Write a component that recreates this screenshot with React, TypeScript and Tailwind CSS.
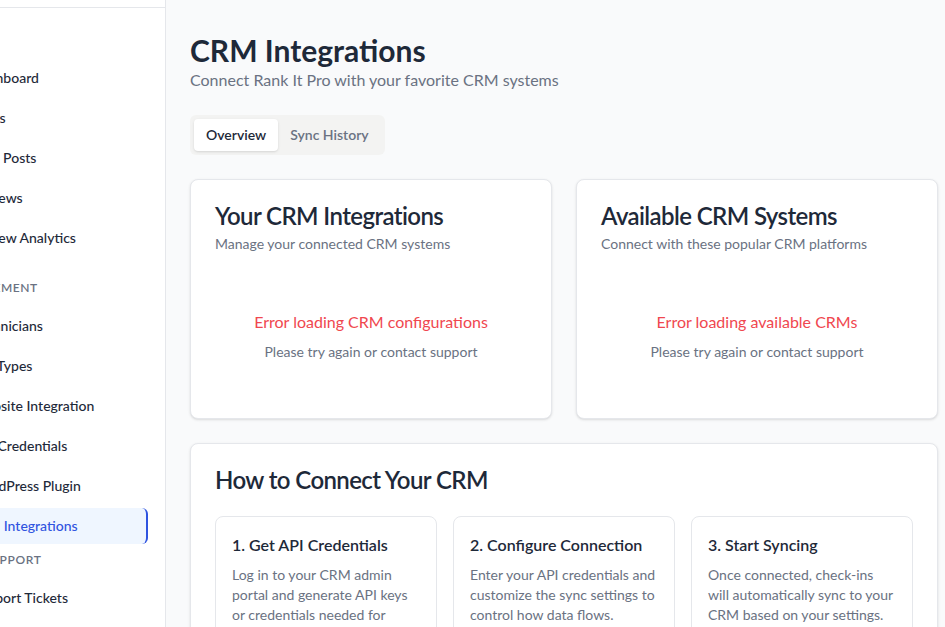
import React from 'react'

const navTop = ['Dashboard', 'Visits', 'Blog Posts', 'Reviews', 'Review Analytics']
const navManage = ['Technicians', 'Job Types', 'Website Integration', 'API Credentials', 'WordPress Plugin']

const steps = [
  {
    title: '1. Get API Credentials',
    body: 'Log in to your CRM admin portal and generate API keys or credentials needed for integration.',
  },
  {
    title: '2. Configure Connection',
    body: 'Enter your API credentials and customize the sync settings to control how data flows.',
  },
  {
    title: '3. Start Syncing',
    body: 'Once connected, check-ins will automatically sync to your CRM based on your settings.',
  },
]

function NavItem({ label, active }: { label: string; active?: boolean }) {
  return (
    <div
      className={
        active
          ? 'h-9 mb-1 flex items-center pl-[9px] pr-3 rounded-md bg-blue-50 text-[#2f54e0] border-r-2 border-[#2f54e0] text-sm font-medium whitespace-nowrap'
          : 'h-9 mb-1 flex items-center px-3 rounded-md text-gray-800 text-sm font-medium whitespace-nowrap'
      }
    >
      {label}
    </div>
  )
}

function Sidebar() {
  return (
    <aside className="w-[166px] shrink-0 bg-white border-r border-gray-200 overflow-hidden">
      <div className="h-2 border-b border-gray-200" />
      <nav className="-ml-[40px] w-[188px] pt-[52px]">
        {navTop.map((l) => (
          <NavItem key={l} label={l} />
        ))}
        <div className="mt-[24px] mb-[12px] -ml-[15px] h-4 flex items-center text-xs font-semibold uppercase tracking-wider text-gray-500 whitespace-nowrap">
          Management
        </div>
        {navManage.map((l) => (
          <NavItem key={l} label={l} />
        ))}
        <NavItem label="CRM Integrations" active />
        <div className="mt-[8px] mb-[12px] pl-[23px] h-4 flex items-center text-xs font-semibold uppercase tracking-wider text-gray-500 whitespace-nowrap">
          Support
        </div>
        <NavItem label="Support Tickets" />
      </nav>
    </aside>
  )
}

function ErrorCard({ title, desc, error }: { title: string; desc: string; error: string }) {
  return (
    <div className="bg-white border border-gray-200 rounded-lg shadow-sm">
      <div className="p-6 flex flex-col gap-1.5">
        <h3 className="text-2xl font-semibold leading-none tracking-tight text-gray-800">{title}</h3>
        <p className="text-sm text-gray-500">{desc}</p>
      </div>
      <div className="px-6 pb-6">
        <div className="py-8 text-center">
          <p className="text-base text-[#f0474f]">{error}</p>
          <p className="mt-2 text-sm text-gray-500">Please try again or contact support</p>
        </div>
      </div>
    </div>
  )
}

export default function App() {
  return (
    <div className="h-screen w-full flex overflow-hidden font-['Lato',sans-serif]">
      <Sidebar />
      <main className="flex-1 bg-gray-50 pl-6 pr-[7px] pt-8 overflow-hidden">
        <h1 className="text-3xl leading-9 font-bold text-gray-800">CRM Integrations</h1>
        <p className="text-base text-gray-500">Connect Rank It Pro with your favorite CRM systems</p>

        <div className="mt-[23px] inline-flex h-10 items-center p-1 rounded-md bg-[#f3f3f2]">
          <div className="h-8 px-3 flex items-center rounded-sm bg-white shadow-sm text-sm font-semibold text-gray-800">
            Overview
          </div>
          <div className="h-8 px-3 flex items-center text-sm font-semibold text-gray-500">Sync History</div>
        </div>

        <div className="mt-[24px] grid grid-cols-2 gap-6">
          <ErrorCard
            title="Your CRM Integrations"
            desc="Manage your connected CRM systems"
            error="Error loading CRM configurations"
          />
          <ErrorCard
            title="Available CRM Systems"
            desc="Connect with these popular CRM platforms"
            error="Error loading available CRMs"
          />
        </div>

        <div className="mt-6 bg-white border border-gray-200 rounded-lg shadow-sm">
          <div className="p-6">
            <h3 className="text-2xl font-semibold leading-none tracking-tight text-gray-800">How to Connect Your CRM</h3>
          </div>
          <div className="px-6 pb-6 grid grid-cols-3 gap-4">
            {steps.map((s) => (
              <div key={s.title} className="border border-gray-200 rounded-lg p-4">
                <h4 className="text-base leading-6 font-semibold text-gray-800">{s.title}</h4>
                <p className="mt-2 text-sm text-gray-500">{s.body}</p>
              </div>
            ))}
          </div>
        </div>
      </main>
    </div>
  )
}
